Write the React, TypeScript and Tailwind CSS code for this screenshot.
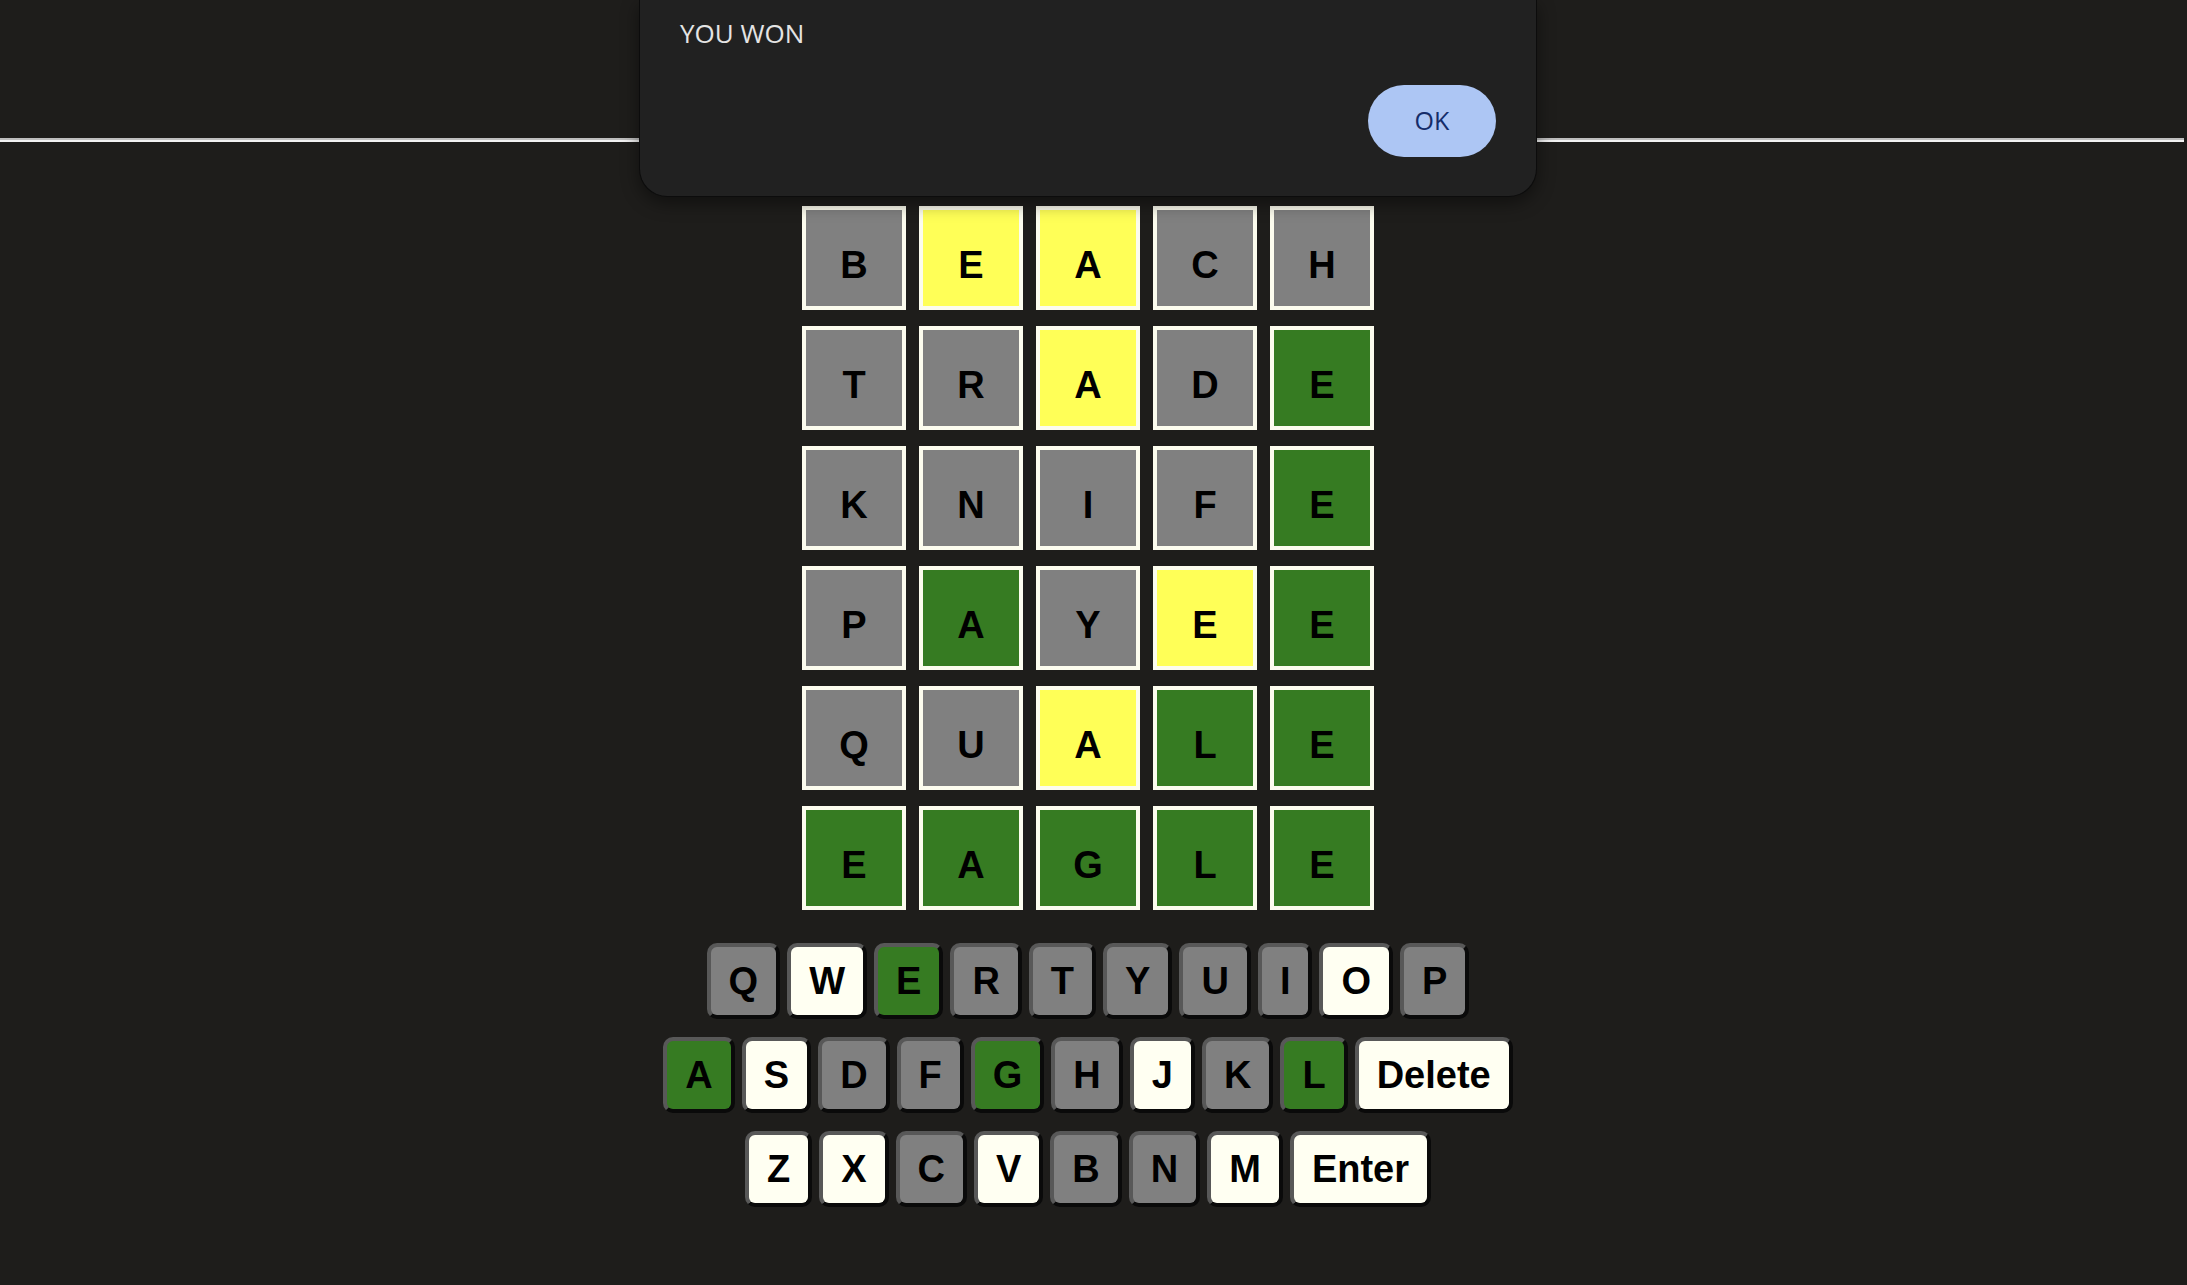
import React from 'react';

type Mark = 'gray' | 'yellow' | 'green' | 'none';

const tileFill: Record<Mark, string> = {
    gray: 'bg-[#808080]',
    yellow: 'bg-[#ffff57]',
    green: 'bg-[#367b22]',
    none: 'bg-[#fffff2]',
};

const keyFill: Record<Mark, string> = {
    gray: 'bg-[#808080]',
    yellow: 'bg-[#ffff57]',
    green: 'bg-[#367b22]',
    none: 'bg-[#fffff2]',
};

const guesses: { word: string; marks: Mark[] }[] = [
    { word: 'BEACH', marks: ['gray', 'yellow', 'yellow', 'gray', 'gray'] },
    { word: 'TRADE', marks: ['gray', 'gray', 'yellow', 'gray', 'green'] },
    { word: 'KNIFE', marks: ['gray', 'gray', 'gray', 'gray', 'green'] },
    { word: 'PAYEE', marks: ['gray', 'green', 'gray', 'yellow', 'green'] },
    { word: 'QUALE', marks: ['gray', 'gray', 'yellow', 'green', 'green'] },
    { word: 'EAGLE', marks: ['green', 'green', 'green', 'green', 'green'] },
];

const keyRows: [string, Mark][][] = [
    [
        ['Q', 'gray'], ['W', 'none'], ['E', 'green'], ['R', 'gray'], ['T', 'gray'],
        ['Y', 'gray'], ['U', 'gray'], ['I', 'gray'], ['O', 'none'], ['P', 'gray'],
    ],
    [
        ['A', 'green'], ['S', 'none'], ['D', 'gray'], ['F', 'gray'], ['G', 'green'],
        ['H', 'gray'], ['J', 'none'], ['K', 'gray'], ['L', 'green'], ['Delete', 'none'],
    ],
    [
        ['Z', 'none'], ['X', 'none'], ['C', 'gray'], ['V', 'none'], ['B', 'gray'],
        ['N', 'gray'], ['M', 'none'], ['Enter', 'none'],
    ],
];

function Tile({ letter, mark }: { letter: string; mark: Mark }) {
    return (
        <div
            className={`w-[104px] h-[104px] border-4 border-[#fcfcee] ${tileFill[mark]} flex items-center justify-center pt-[14px] text-[38px] font-bold text-black`}
        >
            {letter}
        </div>
    );
}

function Key({ label, mark }: { label: string; mark: Mark }) {
    return (
        <button
            className={`h-[76px] px-[18px] rounded-[10px] border-4 border-t-[#585858] border-l-[#585858] border-b-[#0a0a0a] border-r-[#0a0a0a] ${keyFill[mark]} flex items-center justify-center text-[38px] font-bold text-black leading-none`}
        >
            {label}
        </button>
    );
}

export default function App() {
    return (
        <div className="relative min-h-screen bg-[#1e1d1b] overflow-hidden" style={{ fontFamily: '"Liberation Sans", Arial, sans-serif' }}>
            <div className="h-[138px]" />
            <div className="w-[2184px] border-t-2 border-b-2 border-t-[#bdbdbd] border-b-[#f2f2f2]" />

            <div className="w-[2176px] flex flex-col items-center">
                <div className="mt-[64px] flex flex-col gap-[16px]">
                    {guesses.map((g) => (
                        <div key={g.word} className="flex gap-[13px]">
                            {g.word.split('').map((ch, i) => (
                                <Tile key={i} letter={ch} mark={g.marks[i]} />
                            ))}
                        </div>
                    ))}
                </div>

                <div className="mt-[33px] flex flex-col items-center gap-[18px]">
                    {keyRows.map((row, r) => (
                        <div key={r} className="flex gap-[7px]">
                            {row.map(([label, mark]) => (
                                <Key key={label} label={label} mark={mark} />
                            ))}
                        </div>
                    ))}
                </div>
            </div>

            {/* result dialog */}
            <div
                className="absolute top-0 left-[639px] w-[898px] h-[197px] bg-[#212121] border border-t-0 border-[#0c0c0c] rounded-b-[28px] shadow-[0_6px_18px_rgba(0,0,0,0.45)] px-[40px] pt-[15px] flex flex-col"
                style={{ fontFamily: '"Open Sans", "Noto Sans", sans-serif' }}
            >
                <p className="text-[26px] leading-[36px] text-[#e4e4e4]">YOU WON</p>
                <div className="mt-[34px] flex justify-end">
                    <button className="w-[128px] h-[72px] rounded-full bg-[#adc6f4] text-[25px] font-medium text-[#152c69]">
                        OK
                    </button>
                </div>
            </div>
        </div>
    );
}
